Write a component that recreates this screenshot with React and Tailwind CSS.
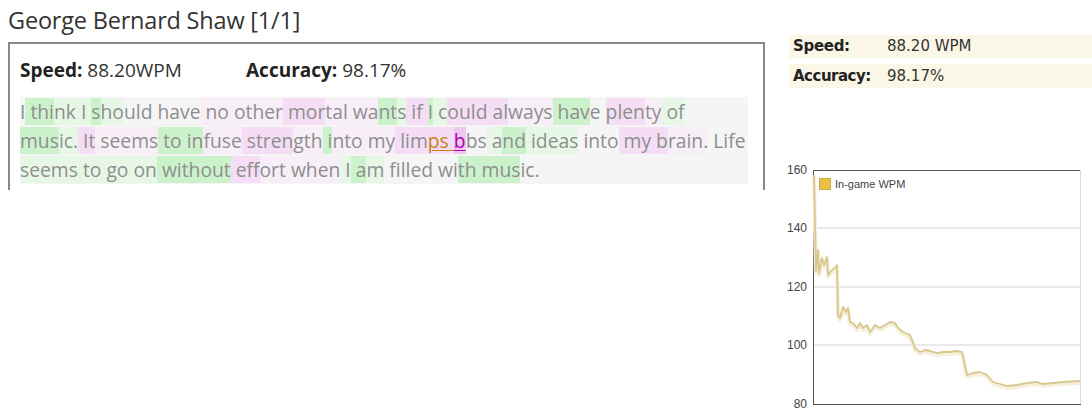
import React from "react";

const HL = {
  "": "",
  g: "bg-[#ccf2cc]",
  g2: "bg-[#e6f7e6]",
  p: "bg-[#f5def5]",
  p2: "bg-[#f7eef7]",
};

const lines = [
  [
    ["I", ""], [" thi", "g"], ["nk", "g2"], [" I ", "g2"], ["s", "g"], ["ho", "g2"], ["uld", ""],
    [" have", ""], [" no", "p2"], [" other", "p2"], [" mor", "p"], ["tal", "p2"], [" wa", "p2"],
    ["nt", "g"], ["s", "g2"], [" if ", "p"], ["I", "g"], [" c", "g2"], ["ould", "p"], [" al", "p"],
    ["ways", "p2"], [" hav", "g"], ["e ", ""], ["plen", "p"], ["ty", "p2"], [" of", "g2"],
  ],
  [
    ["mus", "g"], ["ic.", "g2"], [" It", "p"], [" seems", "p2"], [" to", "g"], [" in", "g"],
    ["fuse", "p2"], [" stren", "p"], ["gth", "p2"], [" i", "g"], ["nto my", "p2"], [" lim", "p"],
    ["ps ", "err1"], ["b", "err2"], ["bs", ""], [" a", "g2"], ["nd", "g"], [" ideas", "g2"],
    [" into", ""], [" my b", "p"], ["rain.", "p2"], [" Life", ""],
  ],
  [
    ["seems", "g2"], [" to", "g2"], [" go", "g2"], [" on", "g2"], [" without", "g"], [" eff", "p"],
    ["ort", "p2"], [" when", "p2"], [" I", "g2"], [" a", "g"], ["m", "g2"], [" filled wi", ""],
    ["th mu", "g"], ["s", "g"], ["ic.", ""],
  ],
];

function Seg({ text, kind }) {
  if (kind === "err1")
    return <span className="bg-[#f5def5] text-[#c7801c] underline decoration-1 underline-offset-2">{text}</span>;
  if (kind === "err2")
    return <span className="bg-[#efc8ef] text-[#b000b0] underline decoration-1 underline-offset-2">{text}</span>;
  return <span className={HL[kind]}>{text}</span>;
}

const pts = [
  [814, 175], [816, 271], [818, 250], [819, 273], [822, 258], [824, 265], [827, 257], [828, 275],
  [832, 270], [835, 268], [837, 265], [838, 315], [840, 318], [843, 307], [846, 312], [848, 308],
  [850, 322], [853, 323], [857, 328], [860, 323], [863, 328], [867, 325], [870, 332], [875, 325],
  [880, 328], [885, 325], [890, 322], [895, 323], [898, 328], [903, 332], [910, 335], [915, 348],
  [920, 352], [925, 350], [930, 351], [937, 353], [943, 352], [950, 352], [957, 351], [962, 352],
  [967, 375], [973, 373], [980, 372], [987, 375], [993, 382], [1000, 384], [1007, 386], [1017, 385],
  [1027, 383], [1037, 382], [1042, 384], [1053, 383], [1063, 382], [1080, 381],
];

function WpmChart() {
  const ox = 775;
  const oy = 160;
  const d = pts.map(([x, y], i) => `${i ? "L" : "M"}${x - ox} ${y - oy}`).join(" ");
  const ticks = [
    [160, 170],
    [140, 228],
    [120, 287],
    [100, 345],
    [80, 404],
  ];
  return (
    <svg width="317" height="255" viewBox="0 0 317 255" className="block">
      {ticks.slice(1, 4).map(([v, y]) => (
        <line key={v} x1="38" x2="306" y1={y - oy} y2={y - oy} stroke="#d4d4d4" strokeWidth="1" />
      ))}
      <rect x="38.5" y={170 - oy + 0.5} width="267" height="234" fill="none" stroke="#555" strokeWidth="1" />
      <line x1="305.5" x2="305.5" y1="10" y2="244" stroke="#ddd" />
      {ticks.map(([v, y]) => (
        <text key={v} x="32" y={y - oy + 4} textAnchor="end" fontSize="12" fill="#444" fontFamily="Liberation Sans, Arial, sans-serif">
          {v}
        </text>
      ))}
      <path d={d} fill="none" stroke="#f5efdc" strokeWidth="4" transform="translate(0 2)" strokeLinejoin="round" />
      <path d={d} fill="none" stroke="#d8c78e" strokeWidth="1.8" strokeLinejoin="round" />
      <rect x="44.5" y="18.5" width="11" height="11" fill="#e9bf46" stroke="#c9a84e" />
      <text x="60" y="28" fontSize="11" fill="#444" fontFamily="Liberation Sans, Arial, sans-serif">
        In-game WPM
      </text>
    </svg>
  );
}

export default function App() {
  return (
    <div className="w-[1092px] h-[415px] bg-white flex overflow-hidden">
      <div className="w-[757px] ml-[8px] shrink-0 font-['Open_Sans',sans-serif]">
        <h1 className="text-[23.5px] leading-[28px] text-[#333] mt-[6px] tracking-[-0.2px]">George Bernard Shaw [1/1]</h1>
        <div className="mt-[8px] border-2 border-b-0 border-[#888] h-[148px] px-[10px]">
          <div className="flex items-center h-[53px] text-[19px] text-[#333]">
            <div className="w-[226px]">
              <b className="font-bold text-[#222]">Speed:</b> 88.20WPM
            </div>
            <div>
              <b className="font-bold text-[#222]">Accuracy:</b> 98.17%
            </div>
          </div>
          <div className="bg-[#f5f5f5] text-[#8e8e8e] text-[19.3px] leading-[29px] w-[728px]">
            {lines.map((ln, i) => (
              <div key={i} className="whitespace-pre">
                {ln.map(([t, k], j) => (
                  <Seg key={j} text={t} kind={k} />
                ))}
              </div>
            ))}
          </div>
        </div>
      </div>
      <div className="ml-[24px] w-[303px] shrink-0 font-['DejaVu_Sans',sans-serif] text-[15px]">
        <div className="mt-[35px] flex flex-col gap-[6px]">
          <div className="flex items-center h-[23px] bg-[#fbf7e6] pl-[4px]">
            <span className="w-[94px] font-bold text-[#222] tracking-[-0.3px]">Speed:</span>
            <span className="text-[#333]">88.20 WPM</span>
          </div>
          <div className="flex items-center h-[24px] bg-[#fbf7e6] pl-[4px]">
            <span className="w-[94px] font-bold text-[#222] tracking-[-0.5px]">Accuracy:</span>
            <span className="text-[#333]">98.17%</span>
          </div>
        </div>
        <div className="mt-[72px] -ml-[14px]">
          <WpmChart />
        </div>
      </div>
    </div>
  );
}
